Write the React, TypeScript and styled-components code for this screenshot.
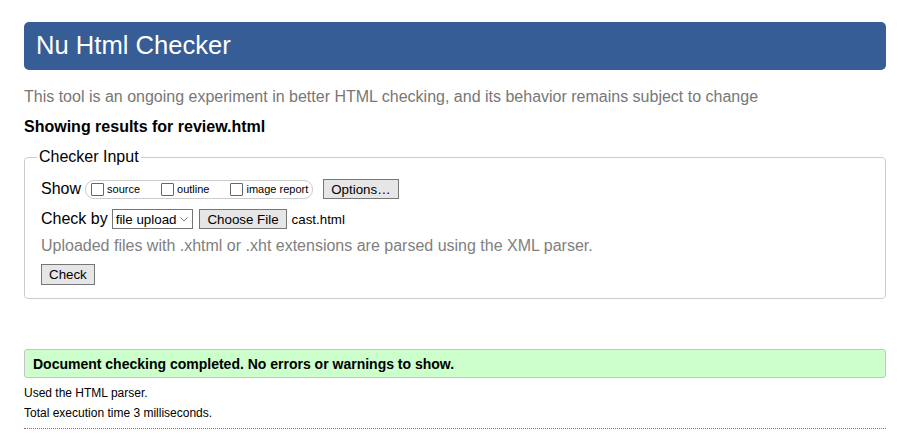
import React from "react";
import styled, { createGlobalStyle } from "styled-components";

const Global = createGlobalStyle`
  html, body { margin: 0; padding: 0; background: #fff; }
  body { font-family: "Liberation Sans", Arial, sans-serif; color: #000; }
`;

const Page = styled.div`
  padding: 22px 19px 0 24px;
`;

const Header = styled.h1`
  margin: 0;
  height: 48px;
  background: #365d95;
  border-radius: 5px;
  color: #fff;
  font-size: 25.6px;
  font-weight: normal;
  display: flex;
  align-items: center;
  padding-left: 12px;
  padding-bottom: 2px;
  box-sizing: border-box;
`;

const Intro = styled.p`
  margin: 18px 0 0;
  font-size: 16px;
  line-height: 18px;
  color: #777;
`;

const Showing = styled.h2`
  margin: 12px 0 0;
  font-size: 16px;
  line-height: 18px;
  font-weight: bold;
`;

const Fieldset = styled.fieldset`
  margin: 12px 0 0;
  padding: 9px 16px 13px 16px;
  border: 1px solid #ccc;
  border-radius: 4px;
`;

const Legend = styled.legend`
  font-size: 16px;
  padding: 0 2px;
  margin-left: -4px;
  line-height: 18px;
`;

const Row = styled.div<{ $mt?: number }>`
  display: flex;
  align-items: center;
  font-size: 16px;
  margin-top: ${(p) => p.$mt ?? 0}px;
`;

const Label = styled.span`
  font-size: 16px;
  margin-right: 4px;
`;

const Pill = styled.div`
  display: flex;
  align-items: center;
  border: 1px solid #ccc;
  border-radius: 9px;
  height: 19px;
  box-sizing: border-box;
  padding: 0 4px 0 5px;
  margin-right: 10px;
`;

const CheckItem = styled.label<{ $last?: boolean }>`
  display: flex;
  align-items: center;
  font-size: 11px;
  margin-right: ${(p) => (p.$last ? 0 : 21)}px;
`;

const Box = styled.span`
  display: inline-block;
  width: 13px;
  height: 13px;
  border: 1px solid #666;
  border-radius: 1px;
  box-sizing: border-box;
  margin-right: 3px;
  margin-top: 1px;
  background: #fff;
`;

const Button = styled.button<{ $h?: number }>`
  font-family: "Liberation Sans", Arial, sans-serif;
  font-size: 13.333px;
  height: ${(p) => p.$h ?? 20}px;
  padding: 0 7px;
  background: #e6e6e6;
  border: 1px solid #767676;
  border-radius: 0;
  color: #000;
  display: flex;
  align-items: center;
`;

const Select = styled.div`
  display: flex;
  align-items: center;
  height: 20px;
  box-sizing: border-box;
  border: 1px solid #767676;
  font-size: 13.333px;
  padding: 0 4px 0 3px;
  margin-right: 6px;
  background: #fff;
`;

const Chevron = styled.svg`
  margin-left: 4px;
`;

const FileName = styled.span`
  font-size: 13.333px;
  margin-left: 5px;
`;

const Note = styled.p`
  margin: 8px 0 0;
  font-size: 16px;
  line-height: 18px;
  color: #808080;
`;

const Success = styled.div`
  margin-top: 50px;
  height: 29px;
  box-sizing: border-box;
  background: #ccffcc;
  border: 1px solid #c4c4c4;
  border-radius: 3px;
  display: flex;
  align-items: center;
  padding-left: 8px;
  font-size: 14px;
  font-weight: bold;
`;

const Small = styled.p<{ $mt: number }>`
  margin: ${(p) => p.$mt}px 0 0;
  font-size: 12px;
  line-height: 14px;
`;

const Divider = styled.hr`
  margin: 8px 0 0;
  border: 0;
  border-top: 1px dotted #777;
`;

export default function App() {
  return (
    <>
      <Global />
      <Page>
        <Header>Nu Html Checker</Header>
        <Intro>
          This tool is an ongoing experiment in better HTML checking, and its
          behavior remains subject to change
        </Intro>
        <Showing>Showing results for review.html</Showing>
        <Fieldset>
          <Legend>Checker Input</Legend>
          <Row $mt={4}>
            <Label>Show</Label>
            <Pill>
              <CheckItem>
                <Box />
                source
              </CheckItem>
              <CheckItem>
                <Box />
                outline
              </CheckItem>
              <CheckItem $last>
                <Box />
                image report
              </CheckItem>
            </Pill>
            <Button type="button">Options…</Button>
          </Row>
          <Row $mt={10}>
            <Label>Check by</Label>
            <Select>
              file upload
              <Chevron width="8" height="5" viewBox="0 0 8 5">
                <path d="M0.5 0.5 L4 4 L7.5 0.5" fill="none" stroke="#777" strokeWidth="1" />
              </Chevron>
            </Select>
            <Button type="button">Choose File</Button>
            <FileName>cast.html</FileName>
          </Row>
          <Note>
            Uploaded files with .xhtml or .xht extensions are parsed using the
            XML parser.
          </Note>
          <Row $mt={9}>
            <Button type="button" $h={21}>
              Check
            </Button>
          </Row>
        </Fieldset>
        <Success>Document checking completed. No errors or warnings to show.</Success>
        <Small $mt={8}>Used the HTML parser.</Small>
        <Small $mt={6}>Total execution time 3 milliseconds.</Small>
        <Divider />
      </Page>
    </>
  );
}
